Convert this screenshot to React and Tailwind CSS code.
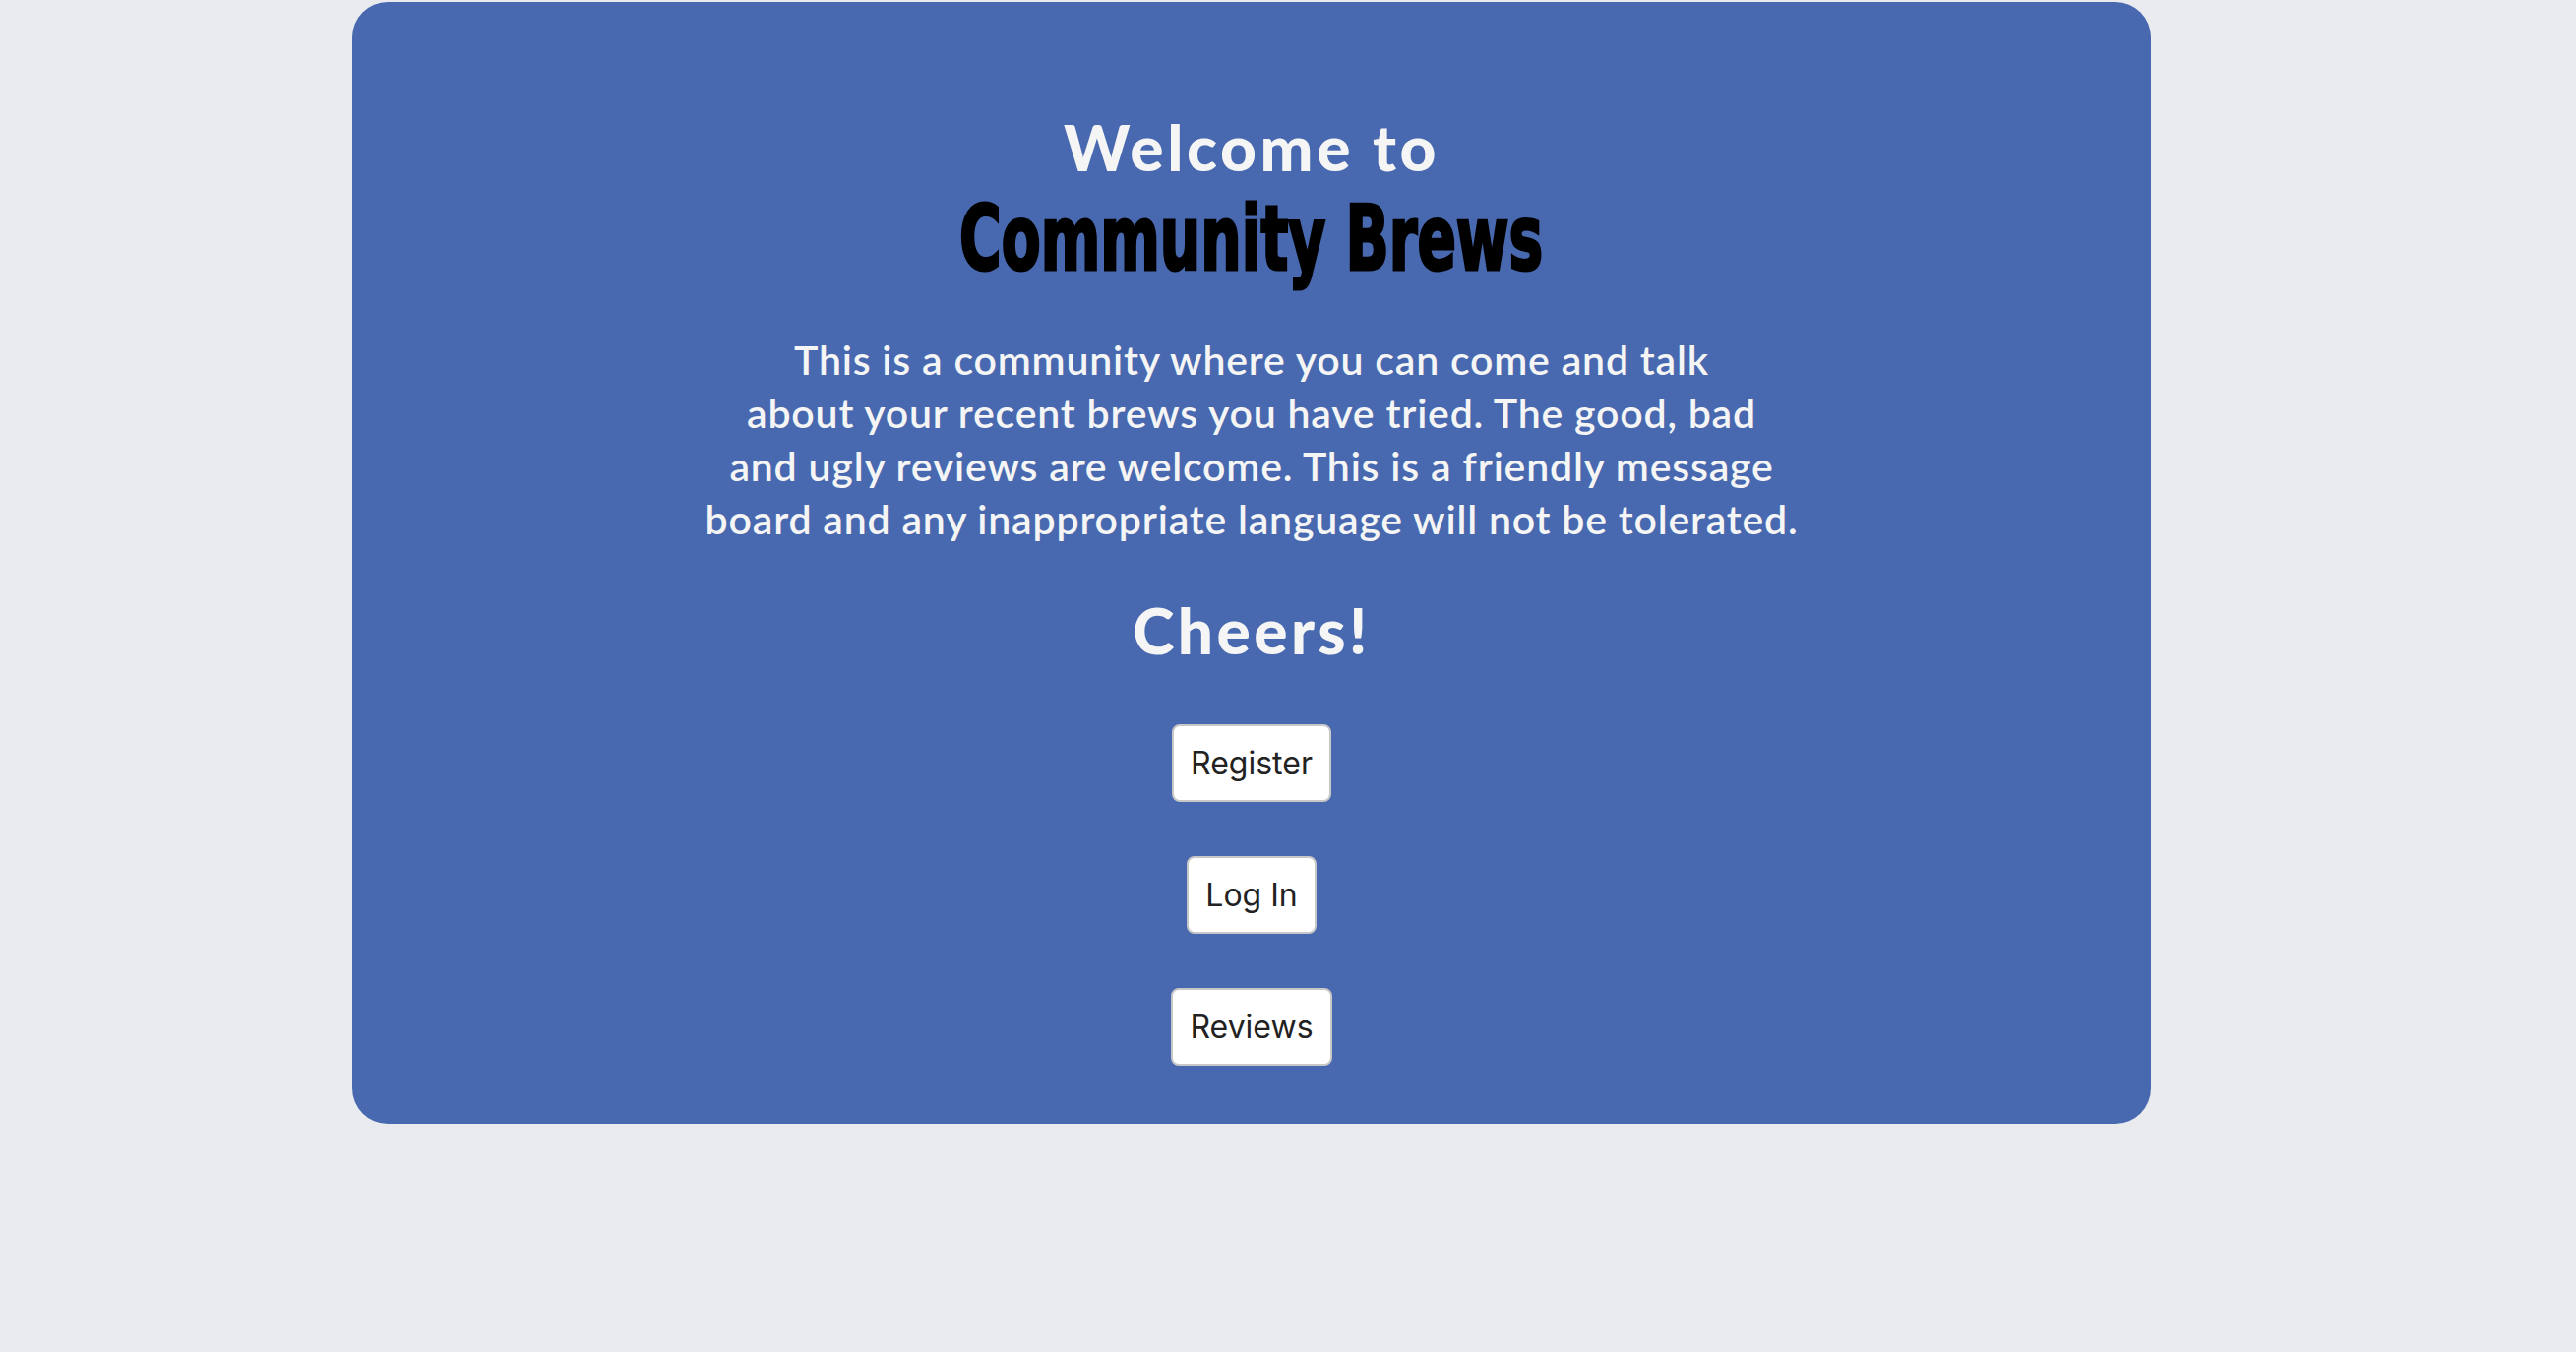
import React from "react";

export default function App() {
  return (
    <div className="min-h-[1374px] w-full bg-[#EAEBEE] pt-[2px]">
      <div className="ml-[358px] flex h-[1140px] w-[1828px] flex-col items-center rounded-[36px] bg-[#4869AF] pt-[116px]">
        <h1 className="text-[64px] leading-[64px] font-black tracking-[3.6px] text-[#F5F5F5] [font-family:Lato,'Open_Sans',sans-serif]">
          Welcome to
        </h1>
        <h2 className="mt-[15px] scale-x-[0.71] text-[91px] leading-[91px] font-bold whitespace-nowrap text-black [font-family:'DejaVu_Sans_Condensed','DejaVu_Sans',sans-serif] [font-stretch:condensed] [-webkit-text-stroke:3px_black]">
          Community Brews
        </h2>
        <p className="mt-[51px] text-center text-[41px] leading-[54px] font-semibold tracking-[0.8px] text-[#F5F5F5] [font-family:Lato,'Open_Sans',sans-serif]">
          This is a community where you can come and talk
          <br />
          about your recent brews you have tried. The good, bad
          <br />
          and ugly reviews are welcome. This is a friendly message
          <br />
          board and any inappropriate language will not be tolerated.
        </p>
        <h3 className="mt-[54px] text-[64px] leading-[64px] font-black tracking-[3.4px] text-[#F5F5F5] [font-family:Lato,'Open_Sans',sans-serif]">
          Cheers!
        </h3>
        <div className="mt-[63px] flex flex-col items-center gap-[55px] [font-family:Inter,'Liberation_Sans',sans-serif]">
          <button className="h-[79px] rounded-[8px] border-2 border-[#C8C8C8] bg-white px-[17px] text-[32px] text-[#222222]">
            Register
          </button>
          <button className="h-[79px] rounded-[8px] border-2 border-[#C8C8C8] bg-white px-[17px] text-[32px] text-[#222222]">
            Log In
          </button>
          <button className="h-[79px] rounded-[8px] border-2 border-[#C8C8C8] bg-white px-[17px] text-[32px] text-[#222222]">
            Reviews
          </button>
        </div>
      </div>
    </div>
  );
}
